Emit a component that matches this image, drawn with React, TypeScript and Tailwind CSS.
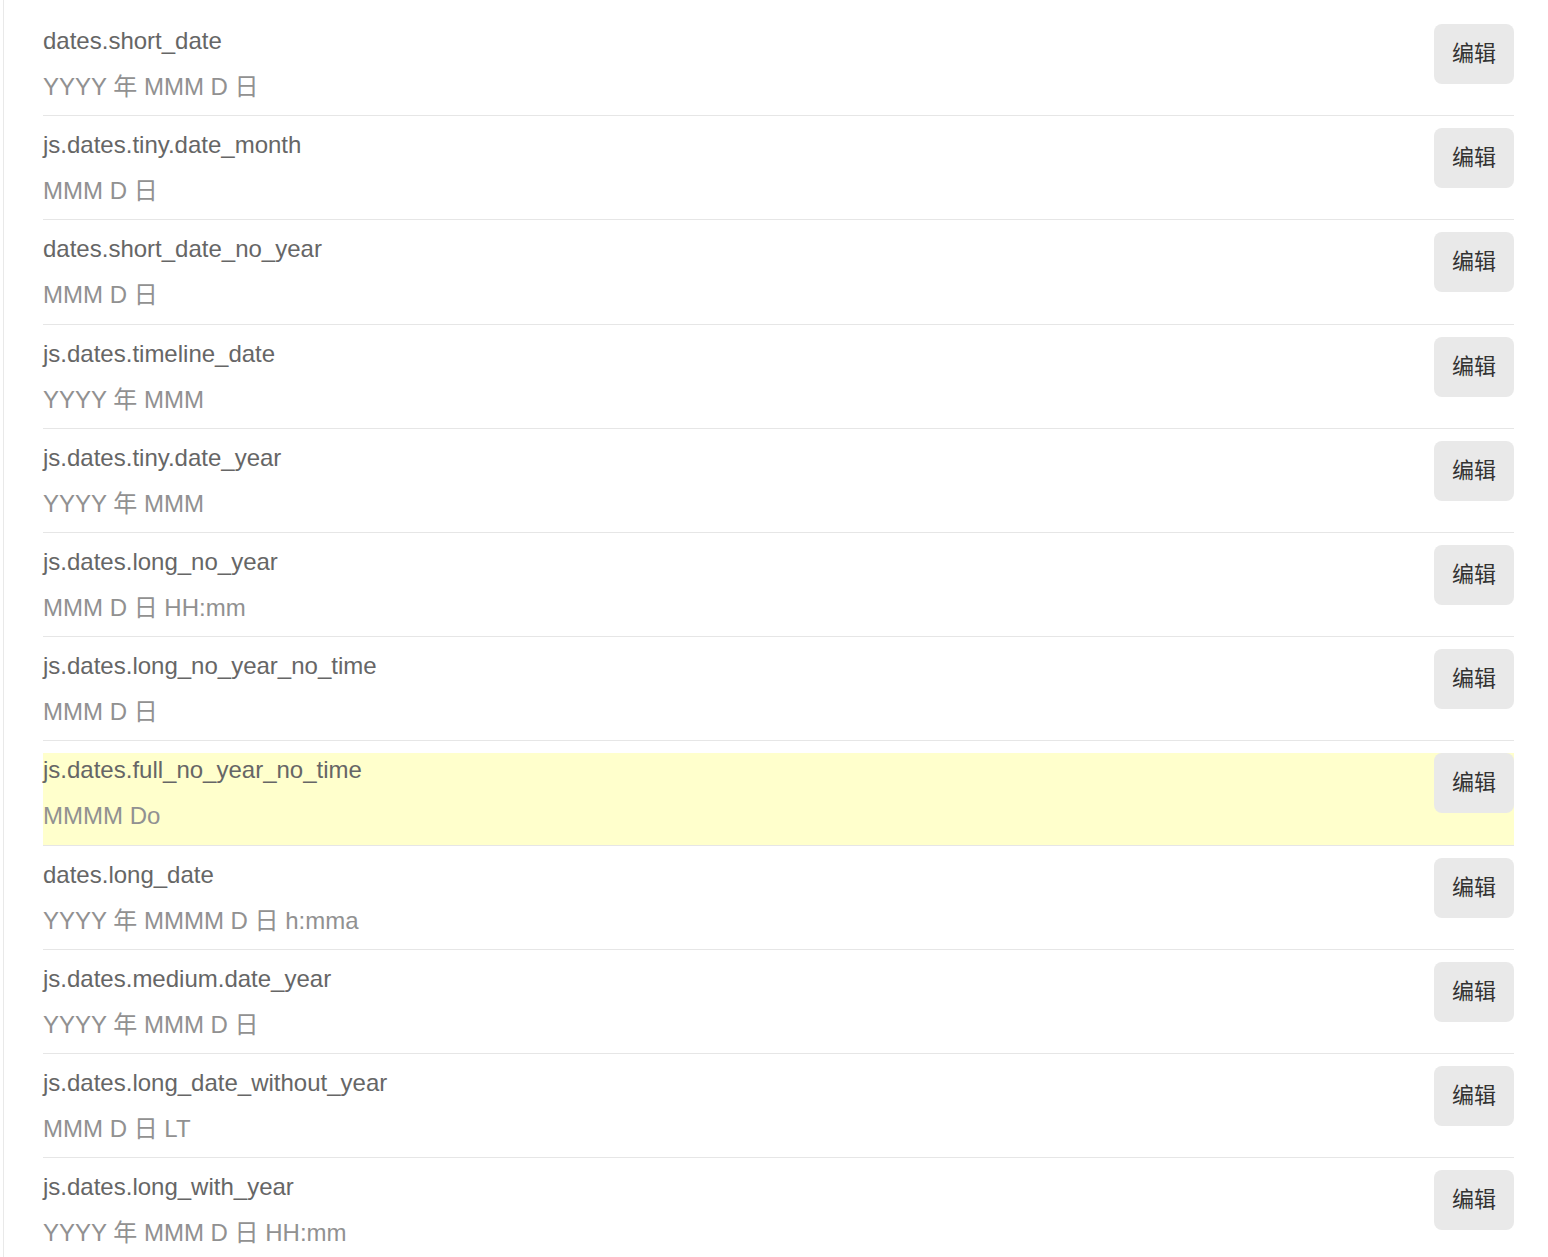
import React from "react";

const rows: { key: string; value: string; hl?: boolean }[] = [
  { key: "dates.short_date", value: "YYYY 年 MMM D 日" },
  { key: "js.dates.tiny.date_month", value: "MMM D 日" },
  { key: "dates.short_date_no_year", value: "MMM D 日" },
  { key: "js.dates.timeline_date", value: "YYYY 年 MMM" },
  { key: "js.dates.tiny.date_year", value: "YYYY 年 MMM" },
  { key: "js.dates.long_no_year", value: "MMM D 日 HH:mm" },
  { key: "js.dates.long_no_year_no_time", value: "MMM D 日" },
  { key: "js.dates.full_no_year_no_time", value: "MMMM Do", hl: true },
  { key: "dates.long_date", value: "YYYY 年 MMMM D 日 h:mma" },
  { key: "js.dates.medium.date_year", value: "YYYY 年 MMM D 日" },
  { key: "js.dates.long_date_without_year", value: "MMM D 日 LT" },
  { key: "js.dates.long_with_year", value: "YYYY 年 MMM D 日 HH:mm" },
];

export default function App() {
  return (
    <div
      className="w-[1548px] h-[1257px] overflow-hidden bg-white"
      style={{ fontFamily: '"Liberation Sans", Arial, "Noto Sans CJK SC", sans-serif' }}
    >
      <div className="ml-[3px] mr-[34px] border-l border-[#e9e9e9] pl-[39px] pt-[24px] min-h-[1257px]">
        {rows.map((r, i) => (
          <div
            key={r.key}
            className={`flex justify-between items-start h-[91.2px] border-b border-[#e6e6e6] box-content ${
              i > 0 ? "mt-[12px]" : ""
            } ${r.hl ? "bg-[#ffffcc]" : ""}`}
          >
            <div className="flex flex-col">
              <div className="text-[24px] leading-[34px] text-[#666666]">{r.key}</div>
              <div className="text-[24px] leading-[34px] mt-[12px] text-[#919191]">{r.value}</div>
            </div>
            <button className="w-[80px] h-[60px] rounded-[8px] bg-[#e9e9e9] text-[#333333] text-[22px] leading-none flex items-center justify-center">
              编辑
            </button>
          </div>
        ))}
      </div>
    </div>
  );
}
